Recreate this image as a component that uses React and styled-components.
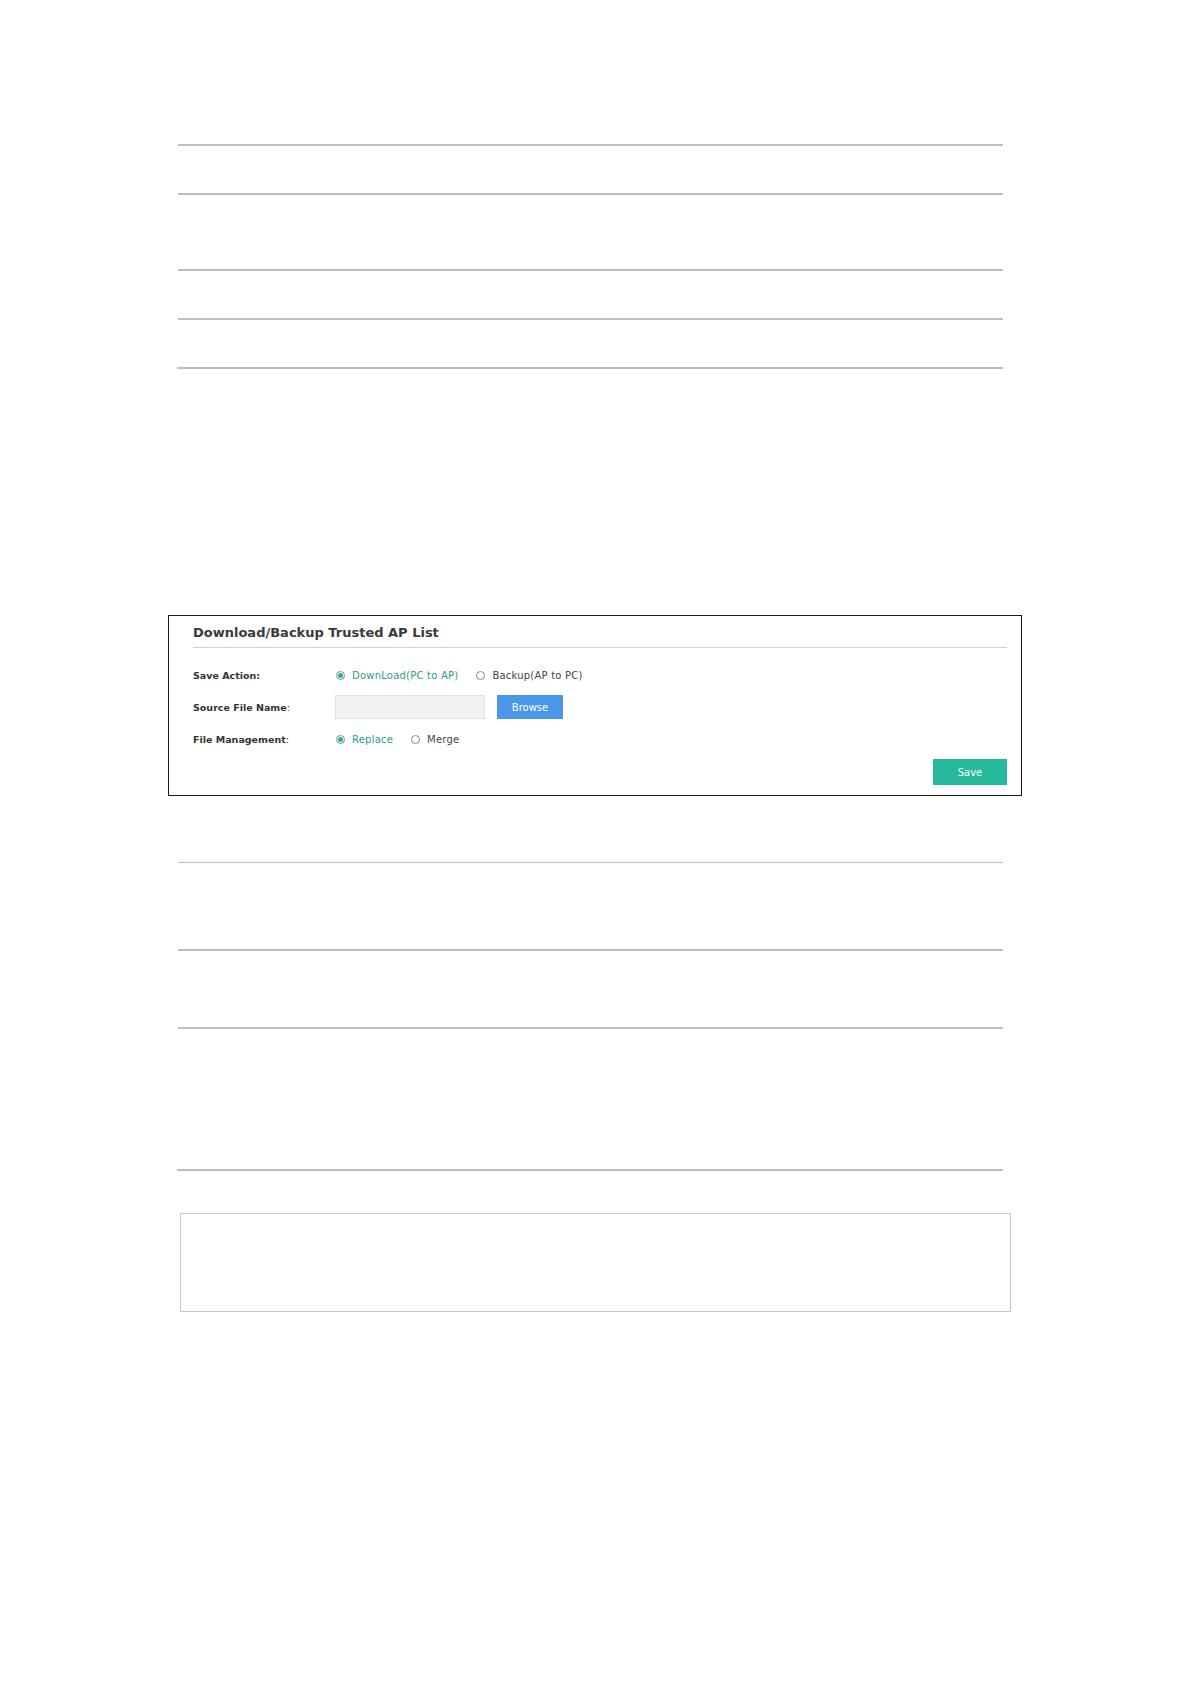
import React from 'react';
import styled, { createGlobalStyle } from 'styled-components';

const GlobalStyle = createGlobalStyle`
  html, body {
    margin: 0;
    padding: 0;
    background: #ffffff;
  }
  body {
    font-family: "DejaVu Sans", Verdana, sans-serif;
    color: #333;
  }
`;

const Page = styled.div`
  width: 1191px;
  min-height: 1684px;
  display: flex;
  flex-direction: column;
`;

const Rule = styled.div`
  margin-top: ${(p) => p.$top}px;
  margin-left: ${(p) => p.$left || 178}px;
  width: ${(p) => 1003 - (p.$left || 178)}px;
  height: ${(p) => p.$thick || 2}px;
  background: #bdbdbd;
`;

const Card = styled.section`
  margin-top: ${(p) => p.$top}px;
  margin-left: 168px;
  width: 854px;
  height: 181px;
  box-sizing: border-box;
  border: 1px solid #1a1a1a;
  padding: 8px 14px 0 24px;
  display: flex;
  flex-direction: column;
`;

const Title = styled.h3`
  margin: 0;
  font-size: 13px;
  font-weight: bold;
  line-height: 18px;
  padding-bottom: 5px;
  color: #3a3a3a;
  border-bottom: 1px solid #cfcfcf;
`;

const Form = styled.div`
  margin-top: 11px;
  display: flex;
  flex-direction: column;
`;

const Row = styled.div`
  height: 32px;
  display: flex;
  align-items: center;
`;

const Label = styled.div`
  width: 142px;
  font-size: 9.5px;
  font-weight: bold;
  color: #333;
`;

const Colon = styled.span`
  font-weight: normal;
`;

const RadioGroup = styled.div`
  display: flex;
  align-items: center;
  gap: 18px;
  padding-left: 1px;
`;

const Option = styled.label`
  display: flex;
  align-items: center;
  gap: 7px;
  font-size: 10px;
  letter-spacing: 0.22px;
  color: ${(p) => (p.$checked ? '#1f9e86' : '#444')};
`;

const Dot = styled.span`
  width: 9px;
  height: 9px;
  box-sizing: border-box;
  border-radius: 50%;
  border: 1px solid #8a8a8a;
  display: flex;
  align-items: center;
  justify-content: center;
  &::after {
    content: '';
    width: 5px;
    height: 5px;
    border-radius: 50%;
    background: ${(p) => (p.$checked ? '#26b39a' : 'transparent')};
  }
`;

const FileInput = styled.div`
  width: 150px;
  height: 24px;
  box-sizing: border-box;
  background: #f2f2f2;
  border: 1px solid #e2e2e2;
`;

const Button = styled.button`
  height: ${(p) => p.$h || 24}px;
  width: ${(p) => p.$w}px;
  margin-left: ${(p) => p.$ml || 0}px;
  border: none;
  padding: 0;
  background: ${(p) => p.$bg};
  color: #fff;
  font-family: "DejaVu Sans", Verdana, sans-serif;
  font-size: 10px;
`;

const Footer = styled.div`
  margin-top: 4px;
  display: flex;
  justify-content: flex-end;
`;

const NoteBox = styled.div`
  margin-top: ${(p) => p.$top}px;
  margin-left: 180px;
  width: 831px;
  height: 99px;
  box-sizing: border-box;
  border: 1px solid #c6c6c6;
`;

function Radio({ checked, children }) {
  return (
    <Option $checked={checked}>
      <Dot $checked={checked} />
      {children}
    </Option>
  );
}

export default function App() {
  return (
    <Page>
      <GlobalStyle />
      <Rule $top={144} />
      <Rule $top={47} />
      <Rule $top={74} />
      <Rule $top={47} />
      <Rule $top={47} $left={177} />

      <Card $top={246}>
        <Title>Download/Backup Trusted AP List</Title>
        <Form>
          <Row>
            <Label>Save Action:</Label>
            <RadioGroup>
              <Radio checked>DownLoad(PC to AP)</Radio>
              <Radio>Backup(AP to PC)</Radio>
            </RadioGroup>
          </Row>
          <Row>
            <Label>
              Source File Name<Colon>:</Colon>
            </Label>
            <FileInput />
            <Button $w={66} $ml={12} $bg="#4a97e8">
              Browse
            </Button>
          </Row>
          <Row>
            <Label>
              File Management<Colon>:</Colon>
            </Label>
            <RadioGroup>
              <Radio checked>Replace</Radio>
              <Radio>Merge</Radio>
            </RadioGroup>
          </Row>
        </Form>
        <Footer>
          <Button $w={74} $h={26} $bg="#27b99b">
            Save
          </Button>
        </Footer>
      </Card>

      <Rule $top={66} $thick={1} />
      <Rule $top={86} />
      <Rule $top={76} />
      <Rule $top={140} $left={177} />

      <NoteBox $top={42} />
    </Page>
  );
}
